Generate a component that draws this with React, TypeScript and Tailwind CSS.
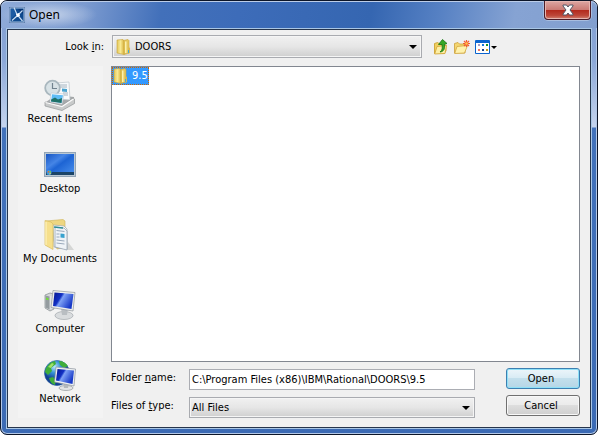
import { useState, type ReactNode } from "react";

function AppLogo() {
  return (
    <svg className="h-4 w-4" viewBox="0 0 16 16" aria-hidden="true">
      <rect x="1" y="1" width="14" height="14" fill="#0f4a8e" stroke="#a9c3e3" />
      <rect x="0" y="0" width="16" height="16" fill="none" stroke="#3f6595" strokeWidth="0.8" />
      <path d="M2 2h3l2 5-5 5z" fill="#1c5ba2" />
      <path d="M9 2h5v5z" fill="#073575" />
      <path d="M5 0.500l3 7 5.500 6.500M13.500 3.500L8 9l-5 4.500" fill="none" stroke="#c7dcf2" strokeWidth="1.200" />
      <path d="M7 7l3-1 1 3-3 1z" fill="#fff" />
    </svg>
  );
}

function FolderIcon() {
  return (
    <svg className="h-4 w-4 shrink-0" viewBox="0 0 16 16" aria-hidden="true">
      <defs>
        <linearGradient id="folder-front" x1="0" x2="1">
          <stop offset="0" stopColor="#e3c75c" />
          <stop offset="0.5" stopColor="#f8e992" />
          <stop offset="1" stopColor="#d9b442" />
        </linearGradient>
      </defs>
      <path d="M7 1.500l5-1 1 1V14l-5 1.500z" fill="#e5c85f" stroke="#cba63c" strokeWidth="0.6" />
      <path d="M9 2.500h1.500V14H9z" fill="#fbf0ae" />
      <path d="M1 1l6-.5L8 2v13.500L1 14z" fill="url(#folder-front)" stroke="#c9a438" strokeWidth="0.6" />
      <path d="M12.500 8l1.500 1v5l-2 1z" fill="#dcb850" />
      <path d="M12 11h1v3h-1z" fill="#3fa9d8" />
    </svg>
  );
}

function UpFolderIcon() {
  return (
    <svg className="h-4 w-4" viewBox="0 0 16 16" aria-hidden="true">
      <path d="M1.500 14.500V4.500l3-1 1.500 1 5-.5v2h2v6l-2 2.500z" fill="#f0cf62" stroke="#c99a24" strokeWidth="0.8" />
      <path d="M1.700 15L4 7.500l9.500-1L12 14.500z" fill="#fdefa6" stroke="#d0a336" strokeWidth="0.8" />
      <path d="M7 13c2.500-2 2.500-4 2-7.500H5.500L9.500 .5l4.500 4-2.500.8c.5 4.500-.5 7.200-4.500 7.700z" fill="#36a827" stroke="#157312" strokeWidth="0.8" />
    </svg>
  );
}

function NewFolderIcon() {
  return (
    <svg className="h-4 w-4" viewBox="0 0 16 16" aria-hidden="true">
      <path d="M0.500 14V4.500L4 3.500l1.500 1.500h5.500v9z" fill="#f4d671" stroke="#cba03a" strokeWidth="0.8" />
      <path d="M0.700 14.500L3 7.500l10.500-1L10.500 14z" fill="#fff2ad" stroke="#d2a740" strokeWidth="0.8" />
      <path d="M12.500 1v7M9 4.500h7M10 2l5 5M15 2l-5 5" stroke="#f45a32" strokeWidth="1.200" />
      <circle cx="12.500" cy="4.500" r="1.300" fill="#ffc24a" />
    </svg>
  );
}

function ViewMenuIcon() {
  return (
    <svg className="h-4 w-[22px]" viewBox="0 0 22 16" aria-hidden="true">
      <rect x="0" y="1" width="15" height="14" rx="1" fill="#0b64cf" />
      <rect x="1" y="4" width="13" height="10" fill="#fff" />
      <path d="M3 5h2v2H3z" fill="#a59bc8" />
      <path d="M7 5h2v2H7z" fill="#1474df" />
      <path d="M11 5h2v2h-2z" fill="#159427" />
      <path d="M3 10h2v2H3z" fill="#f0765f" />
      <path d="M7 10h2v2H7z" fill="#123d8c" />
      <path d="M11 10h2v2h-2z" fill="#c39a1c" />
      <path d="M16 7h6l-3 3z" fill="#000" />
    </svg>
  );
}

function RecentIcon() {
  return (
    <svg className="h-8 w-8" viewBox="0 0 32 32" aria-hidden="true">
      <path d="M2 23l10-7 18 2v6l-12 5z" fill="#a6a9ab" />
      <path d="M12 4l13-1 1 18-12-1z" fill="#f7f9fb" stroke="#bcc5cc" strokeWidth="0.7" />
      <path d="M15 6h8M15 8h8M19 14h5M19 16h5" stroke="#9babb9" strokeWidth="0.9" />
      <path d="M18 9.500l5 .5v3l-5-.5z" fill="#4aa4cf" />
      <circle cx="8.500" cy="9" r="7.300" fill="#d8e2e6" stroke="#a9b7be" strokeWidth="1.800" />
      <path d="M8.500 4v5.500H13" fill="none" stroke="#71838f" strokeWidth="1.200" />
      <path d="M7 14l13 1-2 10-12-2z" fill="#fff" stroke="#b7c5d0" strokeWidth="0.6" />
      <path d="M8 15.200l11 1L17.500 24 7 22.500z" fill="#5ebcf5" />
      <path d="M7.200 20.500l3.800-2 3 2 4-1.500-.5 5L7 22.500z" fill="#1d7168" />
      <path d="M1 23l17 4 11-8 1.500 1v4.500L18 31.500 1 27z" fill="#c8caca" stroke="#929698" strokeWidth="0.7" />
      <path d="M1.500 23.500l16.500 4L29.500 20" fill="none" stroke="#fafafa" strokeWidth="1.200" />
    </svg>
  );
}

function DesktopIcon() {
  return (
    <svg className="h-8 w-8" viewBox="0 0 32 32" aria-hidden="true">
      <defs>
        <linearGradient id="desktop-screen" x1="0" y1="0" x2="1" y2="1">
          <stop offset="0" stopColor="#1856c3" />
          <stop offset="0.35" stopColor="#4585e6" />
          <stop offset="0.5" stopColor="#1d64d4" />
          <stop offset="1" stopColor="#4b91ed" />
        </linearGradient>
      </defs>
      <rect x="0.500" y="3.500" width="31" height="24" fill="#bac8d4" stroke="#93a5b6" />
      <rect x="2" y="5" width="28" height="21" fill="url(#desktop-screen)" />
      <path d="M2 23h28v3H2z" fill="#1b4467" />
      <circle cx="5" cy="23.500" r="2.500" fill="#3d9be0" />
      <path d="M4 22h1v1.500H3.500z" fill="#f1672c" />
      <path d="M5.500 22H7v1.500H5.500z" fill="#84c742" />
      <path d="M5.500 24H7l-1 1.500h-.5z" fill="#ffd549" />
    </svg>
  );
}

function DocumentsIcon() {
  return (
    <svg className="h-8 w-8" viewBox="0 0 32 32" aria-hidden="true">
      <path d="M22 31h8l-6-8z" fill="#d5d6d5" />
      <path d="M2 2l17-1.500 2 1.500v26l-8 2z" fill="#eed681" stroke="#cfb457" strokeWidth="0.6" />
      <path d="M9 6l11 1 3 3v20l-13-2z" fill="#f8fafb" stroke="#9da8af" strokeWidth="0.7" />
      <path d="M11 8l9 1 3 3v19l-12-3z" fill="#eff3f7" stroke="#8d9baa" strokeWidth="0.7" />
      <path d="M10 8l9 1" stroke="#2e8d98" strokeWidth="1.500" />
      <path d="M12.500 11.500l8 1M12.500 15h3M12.500 18h3M12.500 21l8 1M12.500 24l8 1" stroke="#91a2b4" strokeWidth="0.9" />
      <path d="M16.500 14.500l4 .5v4l-4-.5z" fill="#38a2ce" />
      <path d="M1 1.500L7 3l2 2v25.500L1 26z" fill="#f6df8b" stroke="#d7bc60" strokeWidth="0.7" />
      <path d="M2 3v23" stroke="#fff5c5" />
    </svg>
  );
}

function ScreenGradient({ id }: { id: string }) {
  return (
    <linearGradient id={id} x1="0" y1="0" x2="1" y2="0.500">
      <stop offset="0" stopColor="#06148e" />
      <stop offset="0.4" stopColor="#1231c4" />
      <stop offset="0.5" stopColor="#7ea1f5" />
      <stop offset="1" stopColor="#1739c8" />
    </linearGradient>
  );
}

function ComputerIcon() {
  return (
    <svg className="h-8 w-8" viewBox="0 0 32 32" aria-hidden="true">
      <defs>
        <ScreenGradient id="computer-screen" />
      </defs>
      <path d="M1 6l5-2 4 1v15l-4 2-5-3z" fill="#d3d6d8" stroke="#83898d" strokeWidth="0.7" />
      <path d="M1.500 6.500l4 1v13l-4-2z" fill="#949b9f" />
      <path d="M2 8.500l2.500.7v2L2 10.500z" fill="#72df34" />
      <path d="M7 7v13" stroke="#eef0f1" />
      <ellipse cx="20" cy="26.500" rx="9" ry="4" fill="#d9dcde" stroke="#a4a9ad" strokeWidth="0.7" />
      <path d="M17 19h7l-1 7h-5z" fill="#b9bec2" />
      <path d="M9 1.500l22 2L29 22 7 18.500z" fill="#eff0ec" stroke="#8f969e" strokeWidth="0.7" />
      <path d="M10.500 3.500L29.500 5 27.500 20 9 17z" fill="url(#computer-screen)" />
    </svg>
  );
}

function NetworkIcon() {
  return (
    <svg className="h-8 w-8" viewBox="0 0 32 32" aria-hidden="true">
      <defs>
        <ScreenGradient id="network-screen" />
        <radialGradient id="network-globe" cx="0.4" cy="0.25">
          <stop offset="0" stopColor="#b9e5fb" />
          <stop offset="0.5" stopColor="#3592d5" />
          <stop offset="1" stopColor="#123f94" />
        </radialGradient>
      </defs>
      <circle cx="13" cy="14" r="12.500" fill="url(#network-globe)" stroke="#1c5896" strokeWidth="0.6" />
      <path d="M1 13c1-6 5-10 10-11l1 3-5 4 1 3-4 4zM15 2c4 0 7 2 9 5l-4 2-4-3zM5 19l4-1 3 3-1 5c-3-1-5-3-6-7z" fill="#3fae3a" />
      <path d="M4 8l4-4 2 1-3 4z" fill="#a2e16a" />
      <ellipse cx="22" cy="29" rx="7" ry="2.500" fill="#e2e4e5" stroke="#93999e" strokeWidth="0.7" />
      <path d="M19 24h6l-1 5h-4z" fill="#b3b8bc" />
      <path d="M12 8l19.500 2L30 27l-19.500-4z" fill="#edf0f2" stroke="#8c949d" strokeWidth="0.7" />
      <path d="M13.500 10L30 11.500 28.500 25 12 21.500z" fill="url(#network-screen)" />
    </svg>
  );
}

const PLACES = [
  { label: "Recent Items", icon: RecentIcon },
  { label: "Desktop", icon: DesktopIcon },
  { label: "My Documents", icon: DocumentsIcon },
  { label: "Computer", icon: ComputerIcon },
  { label: "Network", icon: NetworkIcon },
];

type DropdownProps = {
  id: string;
  option: string;
  className: string;
  icon?: ReactNode;
};

function Dropdown({ id, option, className, icon }: DropdownProps) {
  return (
    <div className="relative min-w-0 flex-1">
      {icon && <span className="pointer-events-none absolute inset-y-0 left-1 flex items-center">{icon}</span>}
      <select
        id={id}
        className={`block w-full appearance-none border border-[#a9abb0] bg-linear-to-b from-[#f1f1f1] via-[#e6e6e6] to-[#cfcfcf] pr-5 shadow-[inset_0_0_0_1px_#f5f5f5] outline-none ${className}`}
      >
        <option>{option}</option>
      </select>
      <svg className="pointer-events-none absolute inset-y-0 right-[5px] my-auto h-2 w-2" viewBox="0 0 8 8" aria-hidden="true">
        <path d="M0 2h8L4 6z" fill="#000" />
      </svg>
    </div>
  );
}

export default function App() {
  const [path, setPath] = useState("C:\\Program Files (x86)\\IBM\\Rational\\DOORS\\9.5");

  return (
    <div className="flex h-screen flex-col overflow-hidden rounded-[7px] border border-[#0c1528] bg-[linear-gradient(to_bottom,#7f9dd0_0px,#8ca8d8_60px,#c5d4ee_126px,#4272bb_127px,#3b6ab4_100%)] font-['DejaVu_Sans_Condensed','DejaVu_Sans',sans-serif] text-[11px] leading-4 text-black shadow-[inset_0_0_0_1px_#b4c8e6]">
      {/* Title bar */}
      <header className="relative flex h-[27px] shrink-0 items-center rounded-t-[6px] bg-[linear-gradient(100deg,#8fabd8_0%,#7c9bd0_14%,#4270ba_27%,#3d6cb9_40%,#3566b1_62%,#5580c3_73%,#86a3d3_86%,#829fcf_100%)] pl-2 shadow-[inset_0_1px_0_#bccde8]">
        <div className="absolute inset-y-0 left-0 w-24 bg-[radial-gradient(closest-side,#c5d3ea,transparent)]" />
        <div className="relative flex items-center gap-1">
          <AppLogo />
          <h1 className="font-['Noto_Sans',sans-serif] text-[12px]">Open</h1>
        </div>
        <button
          aria-label="Close"
          className="absolute top-0 right-[6px] flex h-[19px] w-[47px] items-center justify-center rounded-b-[4px] border border-t-0 border-[#4c1b27] bg-[linear-gradient(to_bottom,#dda7a3_0%,#cb7b75_48%,#b2281b_50%,#bd4638_80%,#d28272_100%)] shadow-[inset_0_0_0_1px_#e5b5b0,0_0_0_1px_#a8bddf]"
        >
          <svg className="h-3 w-3" viewBox="0 0 12 12" aria-hidden="true">
            <path d="M1 1h3.500L6 3l1.500-2H11v1L8 6l3 4v1H7.500L6 9l-1.500 2H1v-1l3-4-3-4z" fill="#fff" stroke="#535666" />
          </svg>
        </button>
      </header>

      <main className="mx-[5px] mb-[5px] flex min-h-0 flex-1 flex-col border border-[#a9c6e5]">
        <div className="flex min-h-0 flex-1 flex-col gap-2 border border-[#26354c] bg-[#f0f0f0] pt-[5px] pr-[10px] pb-[9px] pl-[10px]">
          {/* Location row */}
          <div className="flex items-center">
            <label htmlFor="look-in" className="w-[94px] pr-2 text-right">
              Look <u>i</u>n:
            </label>
            <div className="flex w-[310px] max-w-full">
              <Dropdown id="look-in" option="DOORS" className="h-[23px] pl-[22px]" icon={<FolderIcon />} />
            </div>
            <div className="ml-[11px] flex gap-[5px]">
              <button aria-label="Up one level">
                <UpFolderIcon />
              </button>
              <button aria-label="Create new folder">
                <NewFolderIcon />
              </button>
              <button aria-label="View menu">
                <ViewMenuIcon />
              </button>
            </div>
          </div>

          <div className="flex min-h-0 flex-1 gap-2">
            {/* Places bar */}
            <nav className="flex w-[85px] shrink-0 flex-col gap-[22px] bg-[#f3f3f3] pt-[13px] pr-px">
              {PLACES.map(({ label, icon: Icon }) => (
                <button key={label} className="flex h-12 flex-col items-center whitespace-nowrap">
                  <Icon />
                  <span>{label}</span>
                </button>
              ))}
            </nav>

            <div className="flex min-w-0 flex-1 flex-col">
              <ul className="min-h-0 flex-1 border border-[#828790] bg-white">
                <li className="flex">
                  <button className="flex h-[18px] items-center gap-[3px] border border-dotted border-[#cc6600] bg-[#3399ff] text-white">
                    <FolderIcon />
                    9.5
                  </button>
                </li>
              </ul>

              {/* Name, type and actions */}
              <div className="mt-[6px] flex gap-[31px]">
                <div className="flex min-w-0 flex-1 flex-col gap-[7px] pt-px">
                  <div className="flex items-start">
                    <label htmlFor="folder-name" className="w-[78px] shrink-0 leading-[18px]">
                      Folder <u>n</u>ame:
                    </label>
                    <input
                      id="folder-name"
                      value={path}
                      onChange={(e) => setPath(e.target.value)}
                      className="h-[21px] min-w-0 flex-1 border border-[#abadb3] bg-white px-[2px] outline-none"
                    />
                  </div>
                  <div className="flex items-start">
                    <label htmlFor="file-type" className="w-[78px] shrink-0 leading-[18px]">
                      Files of <u>t</u>ype:
                    </label>
                    <Dropdown id="file-type" option="All Files" className="h-[21px] pl-[2px]" />
                  </div>
                </div>
                <div className="flex w-[74px] flex-col gap-[6px]">
                  <button className="h-[21px] rounded-[3px] border border-[#3c7fb1] bg-[linear-gradient(to_bottom,#ecf5fa_0%,#d8ebf4_48%,#c3dfec_50%,#b5d6e6_100%)] pr-1 shadow-[inset_0_0_0_1px_#8fe0f7]">
                    Open
                  </button>
                  <button className="h-[21px] rounded-[3px] border border-[#707070] bg-[linear-gradient(to_bottom,#f2f2f2_0%,#ebebeb_48%,#dddddd_50%,#cfcfcf_100%)] pr-1 shadow-[inset_0_0_0_1px_#f8f8f8]">
                    Cancel
                  </button>
                </div>
              </div>
            </div>
          </div>
        </div>
      </main>
    </div>
  );
}
